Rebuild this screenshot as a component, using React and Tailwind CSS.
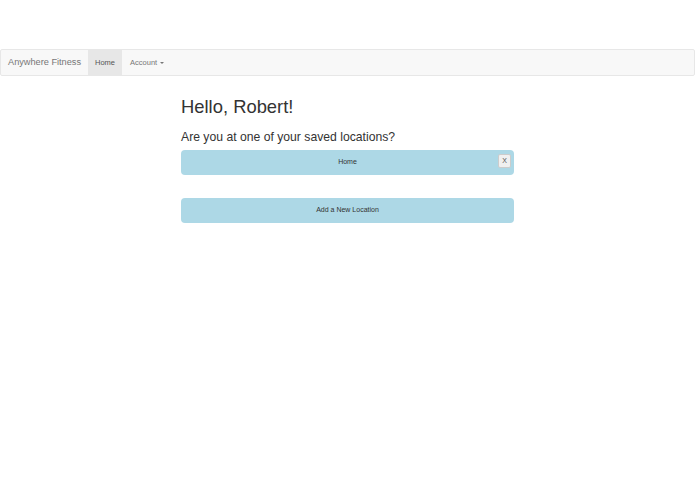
import React from "react";

const App = () => {
  const locations = ["Home"];

  return (
    <div className="min-h-screen bg-white text-[#333] font-['Liberation_Sans',Arial,sans-serif]">
      <div className="h-[49px]" />
      <nav className="flex h-[27px] items-stretch border border-[#e7e7e7] bg-[#f8f8f8] rounded-[2px]">
        <span className="flex items-center pl-[7px] pr-[7px] text-[9.2px] text-[#777]">Anywhere Fitness</span>
        <span className="flex w-[34px] items-center justify-center bg-[#e7e7e7] text-[7.5px] text-[#555]">Home</span>
        <span className="flex items-center pl-[8px] text-[7.5px] text-[#777]">
          Account
          <span className="ml-[3px] inline-block border-x-[2px] border-t-[2px] border-x-transparent border-t-[#777]" />
        </span>
      </nav>

      <main className="ml-[181px] w-[333px] pt-[19px]">
        <h1 className="text-[18.4px] leading-[23px] text-[#333]">Hello, Robert!</h1>
        <h2 className="mt-[11px] text-[12.2px] leading-[16px] text-[#333]">Are you at one of your saved locations?</h2>

        <div className="mt-[5px] flex flex-col">
          {locations.map((loc) => (
            <div key={loc} className="relative flex h-[25px] items-center justify-center rounded-[4px] bg-[#add8e6] text-[7px] text-[#333]">
              {loc}
              <button className="absolute right-[3px] top-[4px] flex h-[14px] w-[13px] items-center justify-center rounded-[2px] border border-[#ccc] bg-[#f0f0f0] text-[7px] text-[#555]">
                X
              </button>
            </div>
          ))}
        </div>

        <button className="mt-[23px] flex h-[25px] w-full items-center justify-center rounded-[4px] bg-[#add8e6] text-[7px] text-[#333]">
          Add a New Location
        </button>
      </main>
    </div>
  );
};

export default App;
